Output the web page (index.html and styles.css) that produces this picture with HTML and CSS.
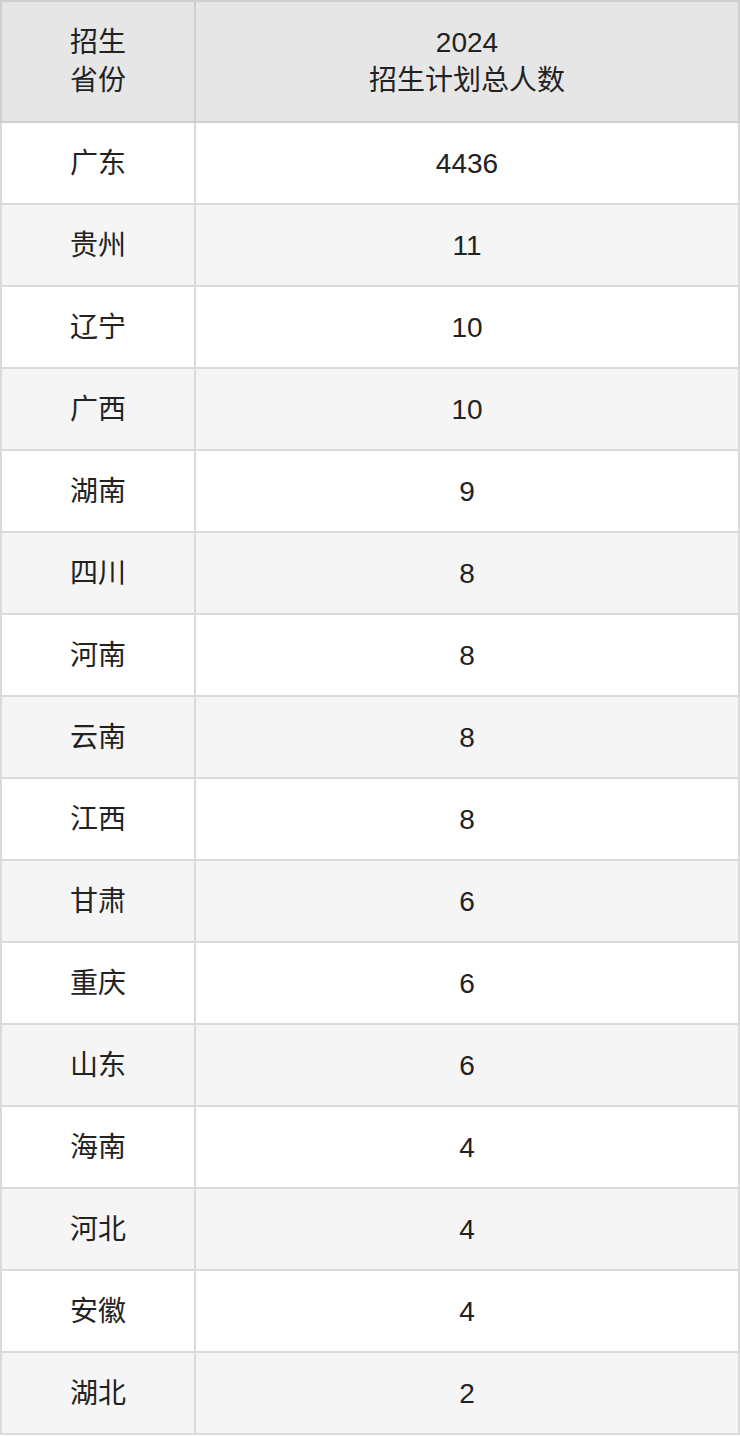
FILE: index.html
```html
<!DOCTYPE html>
<html lang="zh">
<head>
<meta charset="utf-8">
<link rel="stylesheet" href="styles.css">
</head>
<body>
<table class="plan">
  <thead>
    <tr><th class="c1">招生<br>省份</th><th class="c2">2024<br>招生计划总人数</th></tr>
  </thead>
  <tbody>
    <tr><td>广东</td><td>4436</td></tr>
    <tr><td>贵州</td><td>11</td></tr>
    <tr><td>辽宁</td><td>10</td></tr>
    <tr><td>广西</td><td>10</td></tr>
    <tr><td>湖南</td><td>9</td></tr>
    <tr><td>四川</td><td>8</td></tr>
    <tr><td>河南</td><td>8</td></tr>
    <tr><td>云南</td><td>8</td></tr>
    <tr><td>江西</td><td>8</td></tr>
    <tr><td>甘肃</td><td>6</td></tr>
    <tr><td>重庆</td><td>6</td></tr>
    <tr><td>山东</td><td>6</td></tr>
    <tr><td>海南</td><td>4</td></tr>
    <tr><td>河北</td><td>4</td></tr>
    <tr><td>安徽</td><td>4</td></tr>
    <tr><td>湖北</td><td>2</td></tr>
  </tbody>
</table>
</body>
</html>
```
FILE: styles.css
```css
html, body { margin: 0; padding: 0; background: #fff; }
.plan {
  border-collapse: collapse;
  width: 740px;
  table-layout: fixed;
  font-family: "Liberation Sans", "Noto Sans CJK SC", sans-serif;
  font-size: 28px;
  color: #222;
}
.plan th, .plan td {
  border: 2px solid #dadada;
  text-align: center;
  vertical-align: middle;
  padding: 0;
  font-weight: normal;
}
.plan th {
  background: #e6e6e6;
  border-color: #cfcfcf;
  height: 119px;
  line-height: 38px;
}
.plan .c1 { width: 192px; }
.plan td { height: 78px; line-height: 32px; padding-top: 2px; }
.plan tbody tr:nth-child(odd) td { background: #fff; }
.plan tbody tr:nth-child(even) td { background: #f5f5f5; }
```
